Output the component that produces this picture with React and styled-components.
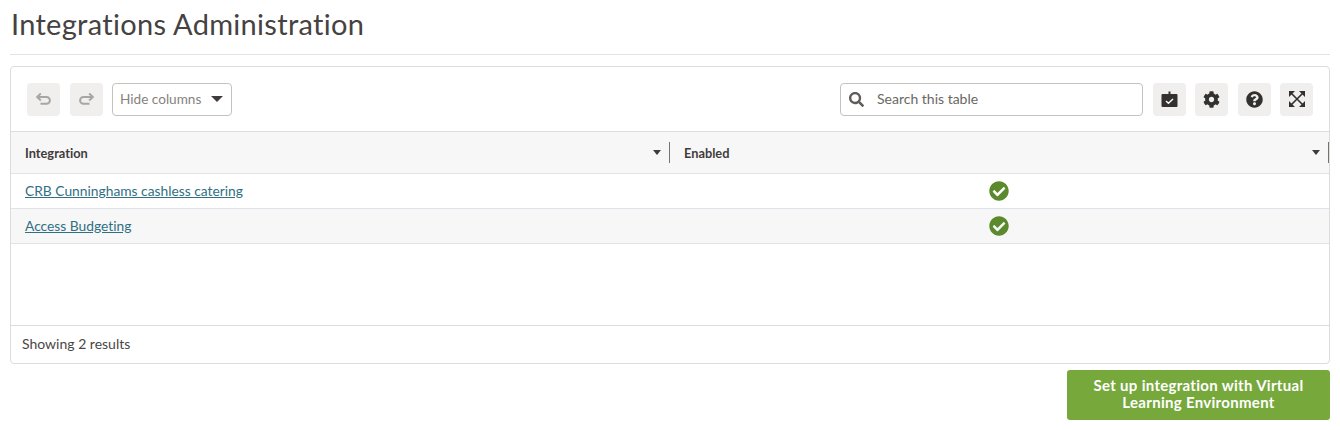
import React from "react";
import styled, { createGlobalStyle } from "styled-components";
import { FaCheckCircle, FaCog, FaQuestionCircle, FaSearch } from "react-icons/fa";

const GlobalStyle = createGlobalStyle`
  html, body {
    margin: 0;
    padding: 0;
    background: #fff;
    font-family: "Lato", "Noto Sans", sans-serif;
    font-variant-ligatures: none;
    color: #3f3c3b;
  }
`;

const rows = [
  { name: "CRB Cunninghams cashless catering", striped: false },
  { name: "Access Budgeting", striped: true },
];

function UndoIcon({ flip }) {
  return (
    <svg width="18" height="18" viewBox="0 0 18 18" fill="none" style={flip ? { transform: "scaleX(-1)" } : undefined}>
      <path d="M5.8 3.6 2.2 7l3.6 3.4" stroke="#a8a6a4" strokeWidth="2" />
      <path d="M3 7h8.5a3.4 3.4 0 0 1 0 6.8H5.5" stroke="#a8a6a4" strokeWidth="2" />
    </svg>
  );
}

function CalendarCheckIcon() {
  return (
    <svg width="17" height="17" viewBox="0 0 17 17">
      <path fill="#34302e" d="M7.5 0.5h2v2.5h6a1 1 0 0 1 1 1v11a1 1 0 0 1-1 1h-14a1 1 0 0 1-1-1V4a1 1 0 0 1 1-1h6z" />
      <path fill="none" stroke="#fff" strokeWidth="1.4" d="M5 10l2.4 2.3L12 8" />
    </svg>
  );
}

function ExpandIcon() {
  return (
    <svg width="18" height="18" viewBox="0 0 18 18">
      <path fill="none" stroke="#34302e" strokeWidth="1.6" d="M3 3l12 12M15 3L3 15" />
      <path fill="#34302e" d="M1 1h6L1 7zM17 1v6l-6-6zM1 17v-6l6 6zM17 17h-6l6-6z" />
    </svg>
  );
}

export default function App() {
  return (
    <Page>
      <GlobalStyle />
      <Title>Integrations Administration</Title>
      <Panel>
        <Toolbar>
          <LeftTools>
            <IconButton><UndoIcon /></IconButton>
            <IconButton><UndoIcon flip /></IconButton>
            <HideColumns>
              Hide columns
              <Caret $large />
            </HideColumns>
          </LeftTools>
          <RightTools>
            <SearchBox>
              <FaSearch size={15} color="#5f5b59" />
              <span>Search this table</span>
            </SearchBox>
            <IconRow>
              <IconButton><CalendarCheckIcon /></IconButton>
              <IconButton $dark><FaCog size={17} /></IconButton>
              <IconButton $dark><FaQuestionCircle size={17} /></IconButton>
              <IconButton $dark><ExpandIcon /></IconButton>
            </IconRow>
          </RightTools>
        </Toolbar>
        <HeaderRow>
          <HeaderCell>
            Integration
            <Caret />
          </HeaderCell>
          <HeaderCell>
            Enabled
            <Caret />
          </HeaderCell>
        </HeaderRow>
        <Body>
          {rows.map((row) => (
            <Row key={row.name} $striped={row.striped}>
              <NameCell><RowLink href="#">{row.name}</RowLink></NameCell>
              <StatusCell><FaCheckCircle size={20} color="#5a8a2c" /></StatusCell>
            </Row>
          ))}
        </Body>
        <Footer>Showing 2 results</Footer>
      </Panel>
      <Actions>
        <SetupButton>Set up integration with Virtual Learning Environment</SetupButton>
      </Actions>
    </Page>
  );
}

const Page = styled.div`
  padding: 0 10px;
  width: 1320px;
`;

const Title = styled.h1`
  margin: 0 0 11px 0;
  padding: 5px 1px 11px;
  height: 38px;
  line-height: 38px;
  font-size: 29px;
  font-weight: 400;
  letter-spacing: 0.3px;
  color: #454241;
  border-bottom: 1px solid #e3e3e3;
  box-sizing: content-box;
`;

const Panel = styled.div`
  border: 1px solid #dcdcdc;
  border-radius: 4px;
  height: 298px;
  box-sizing: border-box;
  display: flex;
  flex-direction: column;
`;

const Toolbar = styled.div`
  height: 65px;
  display: flex;
  align-items: center;
  justify-content: space-between;
  padding: 0 16px;
  box-sizing: border-box;
  border-bottom: 1px solid #dcdcdc;
`;

const LeftTools = styled.div`
  display: flex;
  align-items: center;
  gap: 9.5px;
`;

const RightTools = styled.div`
  display: flex;
  align-items: center;
  gap: 10px;
`;

const IconRow = styled.div`
  display: flex;
  gap: 9.33px;
`;

const IconButton = styled.div`
  width: 33px;
  height: 33px;
  border-radius: 4px;
  background: #f0efee;
  display: flex;
  align-items: center;
  justify-content: center;
  color: ${(p) => (p.$dark ? "#34302e" : "#a8a6a4")};
`;

const HideColumns = styled.div`
  width: 120px;
  height: 33px;
  box-sizing: border-box;
  border: 1px solid #c4c2c0;
  border-radius: 4px;
  display: flex;
  align-items: center;
  justify-content: space-between;
  padding: 0 8px 0 7px;
  font-size: 13.6px;
  color: #858280;
`;

const Caret = styled.span`
  width: 0;
  height: 0;
  border-left: ${(p) => (p.$large ? 6 : 4.5)}px solid transparent;
  border-right: ${(p) => (p.$large ? 6 : 4.5)}px solid transparent;
  border-top: ${(p) => (p.$large ? 6 : 5)}px solid #3f3c3b;
`;

const SearchBox = styled.div`
  width: 303px;
  height: 33px;
  box-sizing: border-box;
  border: 1px solid #c4c2c0;
  border-radius: 4px;
  display: flex;
  align-items: center;
  gap: 13px;
  padding: 0 0 2px 8px;
  font-size: 14px;
  color: #6a6765;

  svg {
    margin-top: 2px;
  }
`;

const HeaderRow = styled.div`
  height: 42px;
  box-sizing: border-box;
  background: #f7f7f7;
  border-bottom: 1px solid #e3e3e3;
  display: grid;
  grid-template-columns: 659px 1fr;
`;

const HeaderCell = styled.div`
  display: flex;
  align-items: center;
  justify-content: space-between;
  padding: 0 9px 0 14px;
  font-size: 12.8px;
  font-weight: 700;
  color: #3f3c3b;
  position: relative;

  &::after {
    content: "";
    position: absolute;
    right: 0;
    top: 10px;
    height: 21px;
    width: 1px;
    background: #77736f;
  }
`;

const Body = styled.div`
  flex: 1;
`;

const Row = styled.div`
  height: 35px;
  box-sizing: border-box;
  display: grid;
  grid-template-columns: 1fr 660px;
  align-items: center;
  border-bottom: 1px solid #dfe3ea;
  background: ${(p) => (p.$striped ? "#f7f7f7" : "#fff")};
`;

const NameCell = styled.div`
  padding: 0 0 2px 14px;
  font-size: 13.8px;
`;

const RowLink = styled.a`
  color: #2f7084;
  text-decoration: underline;
`;

const StatusCell = styled.div`
  display: flex;
  padding-left: 320px;
`;

const Footer = styled.div`
  height: 38px;
  box-sizing: border-box;
  border-top: 1px solid #dcdcdc;
  padding: 0 11px 2px;
  display: flex;
  align-items: center;
  font-size: 14px;
  color: #4a4746;
`;

const Actions = styled.div`
  display: flex;
  justify-content: flex-end;
  margin-top: 6px;
`;

const SetupButton = styled.button`
  width: 263px;
  height: 50px;
  border: none;
  border-radius: 3px;
  background: #76a83c;
  color: #fff;
  font-family: inherit;
  font-size: 15px;
  font-weight: 700;
  letter-spacing: 0.3px;
  line-height: 17px;
  padding: 0 0 3px;
`;
